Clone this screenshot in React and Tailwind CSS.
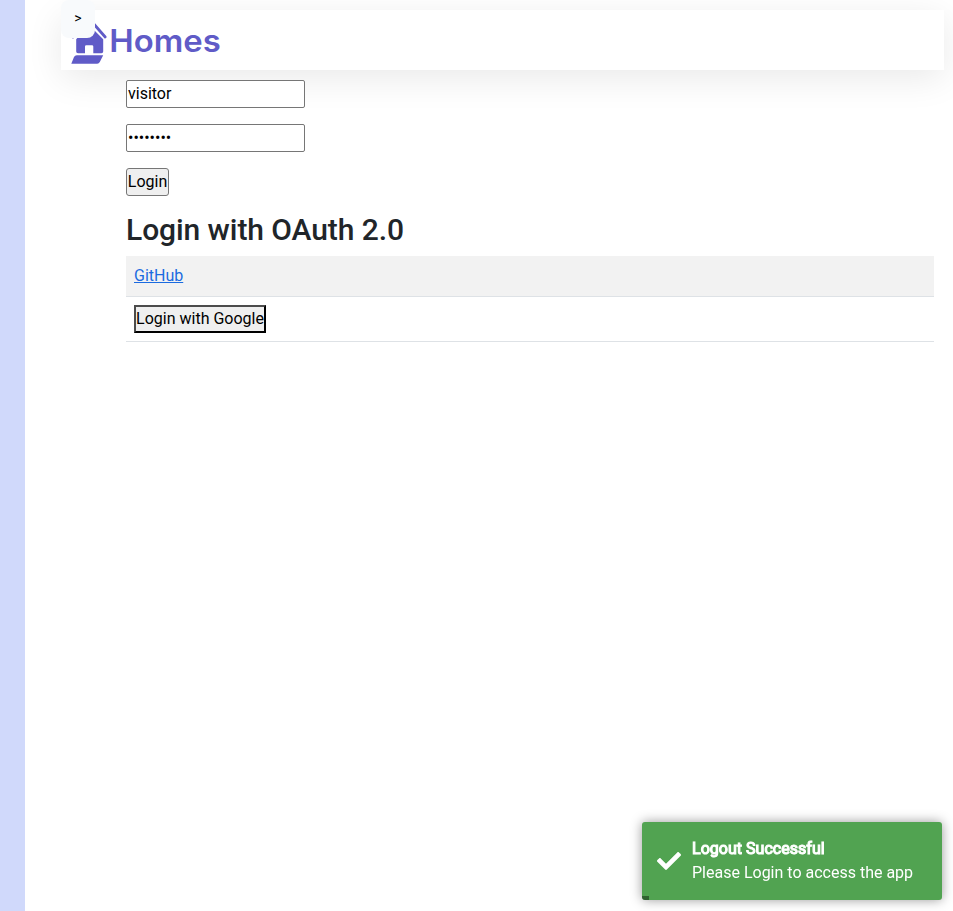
function Logo() {
  return (
    <svg className="block h-[60px] w-[170px]" viewBox="0 0 170 60" role="img" aria-label="Homes">
      <g fill="#605bc7">
        <path d="M28 15 L42.2 29.2 V41.5 Q42.2 43.3 40.4 43.3 H32.3 V36.5 Q32.3 35.2 31 35.2 H25.3 Q24 35.2 24 36.5 V43.3 H17 Q15.2 43.3 15.2 41.5 V29.2 Z" />
        <path d="M15.8 45.2 H42.2 L38.8 52 Q38 53.7 36.2 53.7 H10.3 L13 47 Q13.8 45.2 15.8 45.2 Z" />
      </g>
      <path d="M28 8.5 L44.2 27 M28 8.5 L11.8 27" stroke="#605bc7" strokeWidth="2.8" strokeLinecap="round" fill="none" />
      <text
        x="48.3"
        y="42"
        textLength="111.5"
        lengthAdjust="spacingAndGlyphs"
        fill="#605bc7"
        className="font-['Inter',sans-serif] text-[31px] font-semibold"
      >
        Homes
      </text>
    </svg>
  );
}

function Navbar() {
  return (
    <header className="relative h-[60px] bg-white shadow-[0_8px_36px_rgba(0,0,0,0.09)]">
      <Logo />
      <button className="absolute -top-2.5 left-0 h-[38px] w-[34px] rounded-lg bg-[#f8fafc] pb-0.5 text-center text-sm leading-[18px] text-black">
        &gt;
      </button>
    </header>
  );
}

function LoginForm() {
  const field =
    "block h-7 w-[179px] rounded-[2px] border border-[#767676] bg-white px-px pb-0.5 text-base leading-6 text-black outline-none";
  return (
    <form className="flex flex-col items-start gap-4">
      <input className={field} type="text" defaultValue="visitor" />
      <input className={field} type="password" defaultValue="password" />
      <button
        type="button"
        className="h-7 w-[43px] rounded-[3px] border border-[#767676] bg-[#efefef] text-base leading-6 whitespace-nowrap text-black"
      >
        Login
      </button>
    </form>
  );
}

function Toast() {
  return (
    <div className="fixed right-[11px] bottom-[11px] flex h-[78px] w-[300px] items-center overflow-hidden rounded-[3px] bg-[#51a351] pl-[15px] text-white shadow-[0_0_12px_#999]">
      <svg className="size-6 shrink-0" viewBox="0 0 512 512" fill="currentColor">
        <path d="M173.898 439.404l-166.4-166.4c-9.997-9.997-9.997-26.206 0-36.204l36.203-36.204c9.997-9.998 26.207-9.998 36.204 0L192 312.69 432.095 72.596c9.997-9.997 26.207-9.997 36.204 0l36.203 36.204c9.997 9.997 9.997 26.206 0 36.204l-294.4 294.401c-9.998 9.997-26.207 9.997-36.204-.001z" />
      </svg>
      <div className="ml-[11px] text-base leading-6">
        <div className="tracking-[0.03px] [-webkit-text-stroke:1.1px_white]">Logout Successful</div>
        <div>Please Login to access the app</div>
      </div>
      <div className="absolute bottom-0 left-0 h-1 w-[7px] bg-black opacity-40" />
    </div>
  );
}

export default function App() {
  return (
    <div className="flex h-screen overflow-hidden bg-white font-['Roboto',sans-serif] text-base text-[#212529]">
      <aside className="w-[25px] shrink-0 bg-[#d0d9fb]" />
      <div className="min-w-0 flex-1 pt-2.5 pr-[9px] pl-9">
        <Navbar />
        <main className="relative pt-2.5 pr-2.5 pl-[65px]">
          <LoginForm />
          <h2 className="mt-4 mb-2 text-[30px] leading-9 font-medium tracking-[-0.07px]">Login with OAuth 2.0</h2>
          <div className="h-[41px] border-b border-[#dee2e6] bg-[#f2f2f2] p-2 leading-6">
            <a href="#" className="block w-fit text-[#1b6be0] underline">GitHub</a>
          </div>
          <div className="h-[45px] border-b border-[#dee2e6] p-2">
            <button className="block h-7 w-[132px] border-2 border-t-[#4c4c4c] border-r-black border-b-black border-l-[#4c4c4c] bg-[#efefef] leading-6 whitespace-nowrap text-black">
              Login with Google
            </button>
          </div>
        </main>
      </div>
      <Toast />
    </div>
  );
}
